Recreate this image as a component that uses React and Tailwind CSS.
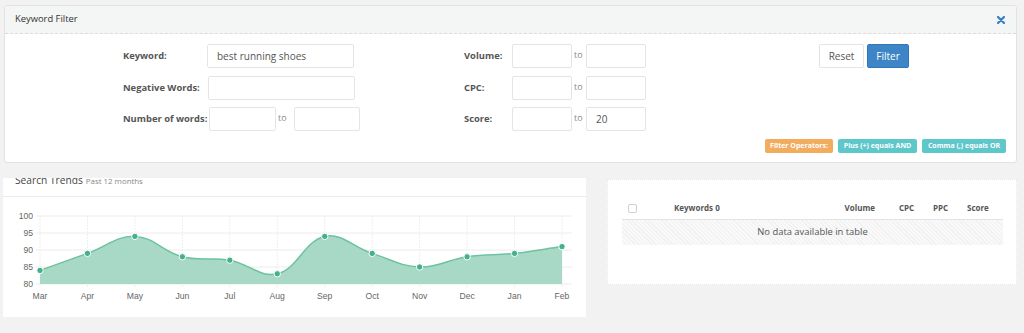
import React from "react";

const months = ["Mar","Apr","May","Jun","Jul","Aug","Sep","Oct","Nov","Dec","Jan","Feb"];
const vals = [84,89,94,88,87,83,94,89,85,88,89,91];

function buildChart() {
  const pts = vals.map((v, i) => ({ x: 37 + (i * 522) / 11, y: 87 - (v - 80) * 3.4 }));
  const t = 0.4;
  const ctrl = pts.map((p, i) => {
    const prev = pts[i - 1] || p;
    const next = pts[i + 1] || p;
    const d01 = Math.hypot(p.x - prev.x, p.y - prev.y);
    const d12 = Math.hypot(next.x - p.x, next.y - p.y);
    const tot = d01 + d12 || 1;
    const fa = (t * d01) / tot;
    const fb = (t * d12) / tot;
    return {
      px: p.x - fa * (next.x - prev.x),
      py: p.y - fa * (next.y - prev.y),
      nx: p.x + fb * (next.x - prev.x),
      ny: p.y + fb * (next.y - prev.y),
    };
  });
  let d = `M${pts[0].x},${pts[0].y}`;
  for (let i = 1; i < pts.length; i++) {
    d += ` C${ctrl[i - 1].nx},${ctrl[i - 1].ny} ${ctrl[i].px},${ctrl[i].py} ${pts[i].x},${pts[i].y}`;
  }
  const area = d + ` L${pts[pts.length - 1].x},87 L${pts[0].x},87 Z`;
  return { pts, d, area };
}

function Chart() {
  const { pts, d, area } = buildChart();
  const yTicks = [100, 95, 90, 85, 80];
  return (
    <svg width="583" height="121" viewBox="0 0 583 121" className="block">
      {yTicks.map((v) => {
        const y = 87 - (v - 80) * 3.4;
        return (
          <g key={v}>
            <line x1="33" x2="569" y1={y} y2={y} stroke="#ececec" strokeWidth="1" />
            <text x="30" y={y + 3} textAnchor="end" fontFamily="'Liberation Sans', Arial, sans-serif" fontSize="8.6" fill="#666">{v}</text>
          </g>
        );
      })}
      {pts.map((p, i) => (
        <g key={i}>
          <line x1={p.x} x2={p.x} y1="19" y2="91" stroke="#eeeeee" strokeWidth="1" strokeDasharray="2 1" />
          <text x={p.x} y="102" textAnchor="middle" fontFamily="'Liberation Sans', Arial, sans-serif" fontSize="8.6" fill="#666">{months[i]}</text>
        </g>
      ))}
      <path d={area} fill="#a8d9c7" />
      <path d={d} fill="none" stroke="#6cc2a1" strokeWidth="1.5" />
      {pts.map((p, i) => (
        <circle key={i} cx={p.x} cy={p.y} r="3.2" fill="#45b08b" stroke="#ffffff" strokeWidth="1" />
      ))}
    </svg>
  );
}

function Input({ w, value, className = "" }) {
  return (
    <div className={`h-[24px] ${w} border border-[#e4e4e4] rounded-[2px] bg-white flex items-center pl-[9px] text-[10px] text-[#555] ${className}`}>
      {value}
    </div>
  );
}

function Label({ children, w }) {
  return <div className={`${w} text-[9.4px] font-bold text-[#555]`}>{children}</div>;
}

function To({ w }) {
  return <div className={`${w} pl-[2px] pb-[3px] text-[9px] text-[#8a8a8a]`}>to</div>;
}

export default function App() {
  return (
    <div className="w-[1024px] h-[333px] overflow-hidden bg-[#f2f2f2] pt-[5px] font-['Open_Sans',sans-serif]">
      {/* Keyword Filter panel */}
      <div className="ml-[4px] w-[1013px] h-[158px] bg-white border border-[#e2e2e2] rounded-[3px] overflow-hidden">
        <div className="h-[28px] bg-[#f4f5f5] border-b border-dashed border-[#dcdcdc] flex items-center justify-between pl-[10px] pr-[11px]">
          <span className="text-[9.4px] text-[#333]">Keyword Filter</span>
          <svg width="8" height="8" viewBox="0 0 8 8">
            <path d="M1 1 L7 7 M7 1 L1 7" stroke="#3a7fc1" strokeWidth="2.2" strokeLinecap="round" />
          </svg>
        </div>
        <div className="pt-[10px] pl-[118px] pr-[10px]">
          <div className="flex items-start">
            {/* left column */}
            <div className="w-[341px] flex flex-col">
              <div className="flex items-center">
                <Label w="w-[84px]">Keyword:</Label>
                <Input w="w-[147px]" value="best running shoes" />
              </div>
              <div className="flex items-center mt-[8px]">
                <Label w="w-[85px]">Negative Words:</Label>
                <Input w="w-[147px]" />
              </div>
              <div className="flex items-center mt-[7px]">
                <Label w="w-[86px]">Number of words:</Label>
                <Input w="w-[67px]" />
                <To w="w-[18px]" />
                <Input w="w-[66px]" />
              </div>
            </div>
            {/* middle column */}
            <div className="w-[182px] flex flex-col">
              <div className="flex items-center">
                <Label w="w-[48px]">Volume:</Label>
                <Input w="w-[60px]" />
                <To w="w-[14px]" />
                <Input w="w-[60px]" />
              </div>
              <div className="flex items-center mt-[8px]">
                <Label w="w-[48px]">CPC:</Label>
                <Input w="w-[60px]" />
                <To w="w-[14px]" />
                <Input w="w-[60px]" />
              </div>
              <div className="flex items-center mt-[7px]">
                <Label w="w-[48px]">Score:</Label>
                <Input w="w-[60px]" />
                <To w="w-[14px]" />
                <Input w="w-[60px]" value="20" />
              </div>
            </div>
            {/* buttons */}
            <div className="ml-[173px] flex items-center gap-[3px]">
              <div className="w-[45px] h-[24px] border border-[#e4e4e4] rounded-[2px] bg-white flex items-center justify-center text-[10px] text-[#555]">Reset</div>
              <div className="w-[42px] h-[24px] border border-[#3577b5] rounded-[2px] bg-[#3d85c6] flex items-center justify-center text-[10px] text-white">Filter</div>
            </div>
          </div>
          <div className="flex justify-end gap-[5px] mt-[8px]">
            <div className="w-[68px] h-[14px] rounded-[2px] bg-[#f2ac5e] flex items-center justify-center text-[7px] font-bold text-white">Filter Operators:</div>
            <div className="w-[79px] h-[14px] rounded-[2px] bg-[#5ec7ca] flex items-center justify-center text-[7px] font-bold text-white">Plus (+) equals AND</div>
            <div className="w-[84px] h-[14px] rounded-[2px] bg-[#5ec7ca] flex items-center justify-center text-[7px] font-bold text-white">Comma (,) equals OR</div>
          </div>
        </div>
      </div>

      {/* bottom row */}
      <div className="mt-[15px] flex items-start">
        {/* Search trends */}
        <div className="ml-[3px] w-[583px] h-[139px] bg-white overflow-hidden">
          <div className="h-[19px] border-b border-[#ececec] overflow-hidden pl-[12px]">
            <div className="-mt-[7px] leading-[14px] whitespace-nowrap">
              <span className="text-[10.2px] text-[#444]">Search Trends</span>
              <span className="text-[7.9px] text-[#888] ml-[3px]">Past 12 months</span>
            </div>
          </div>
          <Chart />
        </div>

        {/* table panel */}
        <div className="ml-[21px] mt-[1px] w-[410px] h-[106px] bg-white border border-dotted border-[#e8e8e8] pl-[14px] pr-[13px] pt-[17px]">
          <div className="h-[23px] border-b border-[#e3e3e3] flex items-center text-[8px] font-bold text-[#555]">
            <div className="w-[52px] pl-[6px] flex items-center">
              <div className="w-[9px] h-[9px] border border-[#cfcfcf] rounded-[2px] bg-white" />
            </div>
            <div className="w-[150px]">Keywords 0</div>
            <div className="w-[51px] text-right">Volume</div>
            <div className="ml-[24px] w-[34px]">CPC</div>
            <div className="w-[34px]">PPC</div>
            <div className="w-[36px]">Score</div>
          </div>
          <div className="h-[25px] flex items-center justify-center text-[9.4px] text-[#555] bg-[repeating-linear-gradient(45deg,#f1f1f1_0px,#f1f1f1_1px,#f9f9f9_1px,#f9f9f9_3px)]">
            No data available in table
          </div>
        </div>
      </div>
    </div>
  );
}
